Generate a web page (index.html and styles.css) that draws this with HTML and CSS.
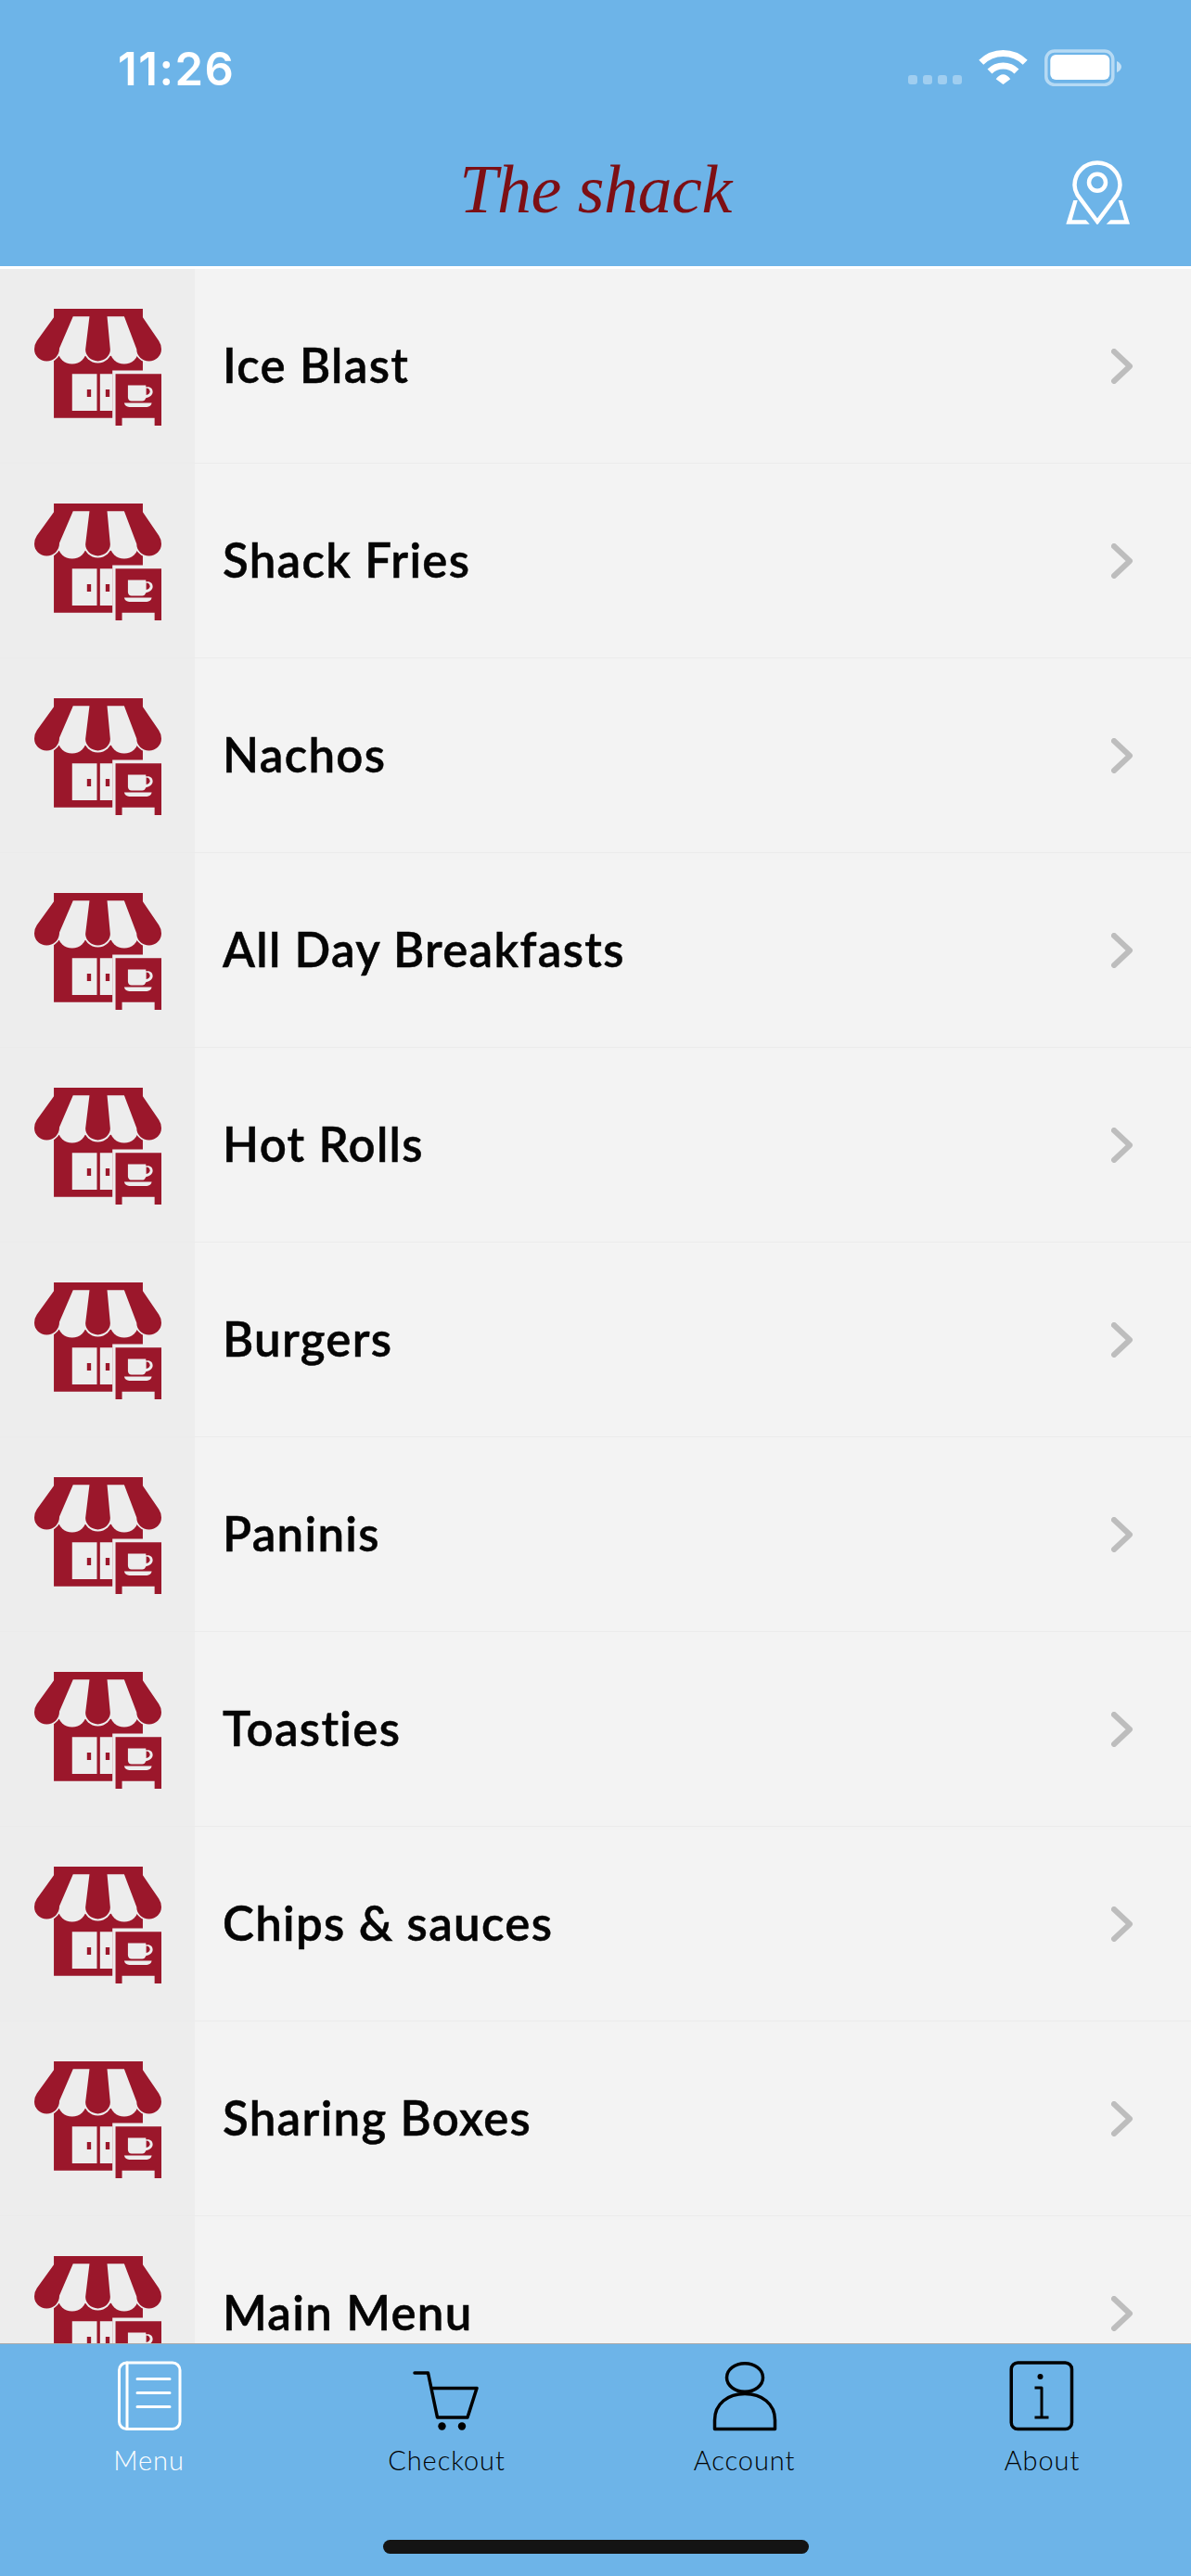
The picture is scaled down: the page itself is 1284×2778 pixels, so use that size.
FILE: index.html

```html
<!DOCTYPE html>
<html lang="en">
<head>
    <meta charset="UTF-8">
    <meta name="viewport" content="width=device-width, initial-scale=1.0">
    <title>The shack</title>
    <link rel="stylesheet" href="styles.css">
</head>
<body>
    <svg class="defs" width="0" height="0">
        <symbol id="shop" viewBox="110 158 410 377">
            <!-- building and doors -->
            <path class="red" d="M173 310H460V357H362V510H173Z"/>
            <path class="cell" d="M232 368H312V487H232ZM322 368H362V487H322Z"/>
            <path class="red" d="M280 418H293V442H280ZM340 418H353V442H340Z"/>
            <!-- gaps under the awning -->
            <ellipse class="cell" cx="232" cy="292" rx="46" ry="44"/>
            <ellipse class="cell" cx="400" cy="292" rx="46" ry="44"/>
            <ellipse class="cell" cx="315" cy="290" rx="45" ry="43"/>
            <ellipse class="cell" cx="150" cy="288" rx="45" ry="44"/>
            <ellipse class="cell" cx="480" cy="288" rx="45" ry="44"/>
            <path class="cell" d="M190 200H440V300H190Z"/>
            <!-- awning -->
            <path class="red" d="M173 158H460V186L512 262Q520 274 520 288C520 310 502 327 480 327C458 327 440 310 440 288L400 183H345L355 290C355 310 337 327 315 327C293 327 275 310 275 290L288 183H235L191 285C191 310 172 327 150 327C128 327 110 310 110 288Q110 274 118 262L173 186Z"/>
            <!-- sign with cup -->
            <path class="red" d="M372 368H520V535H498V510H393V535H372Z"/>
            <path class="cell" d="M412 405H470V410H476C486 410 492 417 492 426C492 436 484 443 470 446C468 452 464 456 458 456H424C417 456 412 451 412 444Z"/>
            <path class="red" d="M471 414C478 414 483 419 483 425C483 431 478 435 471 436Z"/>
            <path class="cell" d="M400 462H489C487 471 481 475 473 475H416C408 475 402 471 400 462Z"/>
        </symbol>
    </svg>

    <div class="header">
        <div class="status-bar">
            <div class="time">11:26</div>
            <svg class="status-icons" viewBox="0 0 230 40" width="230" height="40">
                <g class="signal">
                    <rect x="0" y="28" width="10" height="10" rx="3"/>
                    <rect x="16" y="28" width="10" height="10" rx="3"/>
                    <rect x="32" y="28" width="10" height="10" rx="3"/>
                    <rect x="48" y="28" width="10" height="10" rx="3"/>
                </g>
                <path class="wifi" d="M78.8 14.3A33.5 33.5 0 0 1 126.2 14.3"/>
                <path class="wifi" d="M88 24A20.5 20.5 0 0 1 117 24"/>
                <path class="wifi-dot" d="M94.7 32.2Q102.5 22.4 110.3 32.2L102.5 38Z"/>
                <rect class="batt-line" x="148.8" y="2" width="72" height="36.4" rx="9"/>
                <rect class="batt-fill" x="153.3" y="6" width="64" height="27" rx="6"/>
                <path class="batt-nub" d="M225 13C228 14 230 17 230 19C230 21 228 24 225 25Z"/>
            </svg>
        </div>
        <div class="nav">
            <div class="title">The shack</div>
            <svg class="pin" viewBox="0 0 69 69" width="69" height="69">
                <path class="pin-line" d="M34 66L12.500 37C10.500 33.500 9.500 30 9.500 26.500A24.500 24 0 0 1 58.500 26.500C58.500 30 57.500 33.500 55.500 37Z"/>
                <circle class="pin-line" cx="34" cy="23.700" r="9"/>
                <path class="pin-fill" d="M8.300 43H12.700L6.700 64.300H21.700L25.700 68.700H0.300ZM56.700 43H61L69 68.700H43.700L48.300 64.300H63Z"/>
            </svg>
        </div>
    </div>

    <div class="list">
        <div class="row"><div class="thumb"><svg class="shop"><use href="#shop"/></svg></div><div class="name">Ice Blast</div><svg class="chev" viewBox="0 0 24 38"><path d="M3 3L20 19L3 35"/></svg></div>
        <div class="row"><div class="thumb"><svg class="shop"><use href="#shop"/></svg></div><div class="name">Shack Fries</div><svg class="chev" viewBox="0 0 24 38"><path d="M3 3L20 19L3 35"/></svg></div>
        <div class="row"><div class="thumb"><svg class="shop"><use href="#shop"/></svg></div><div class="name">Nachos</div><svg class="chev" viewBox="0 0 24 38"><path d="M3 3L20 19L3 35"/></svg></div>
        <div class="row"><div class="thumb"><svg class="shop"><use href="#shop"/></svg></div><div class="name">All Day Breakfasts</div><svg class="chev" viewBox="0 0 24 38"><path d="M3 3L20 19L3 35"/></svg></div>
        <div class="row"><div class="thumb"><svg class="shop"><use href="#shop"/></svg></div><div class="name">Hot Rolls</div><svg class="chev" viewBox="0 0 24 38"><path d="M3 3L20 19L3 35"/></svg></div>
        <div class="row"><div class="thumb"><svg class="shop"><use href="#shop"/></svg></div><div class="name">Burgers</div><svg class="chev" viewBox="0 0 24 38"><path d="M3 3L20 19L3 35"/></svg></div>
        <div class="row"><div class="thumb"><svg class="shop"><use href="#shop"/></svg></div><div class="name">Paninis</div><svg class="chev" viewBox="0 0 24 38"><path d="M3 3L20 19L3 35"/></svg></div>
        <div class="row"><div class="thumb"><svg class="shop"><use href="#shop"/></svg></div><div class="name">Toasties</div><svg class="chev" viewBox="0 0 24 38"><path d="M3 3L20 19L3 35"/></svg></div>
        <div class="row"><div class="thumb"><svg class="shop"><use href="#shop"/></svg></div><div class="name">Chips &amp; sauces</div><svg class="chev" viewBox="0 0 24 38"><path d="M3 3L20 19L3 35"/></svg></div>
        <div class="row"><div class="thumb"><svg class="shop"><use href="#shop"/></svg></div><div class="name">Sharing Boxes</div><svg class="chev" viewBox="0 0 24 38"><path d="M3 3L20 19L3 35"/></svg></div>
        <div class="row"><div class="thumb"><svg class="shop"><use href="#shop"/></svg></div><div class="name">Main Menu</div><svg class="chev" viewBox="0 0 24 38"><path d="M3 3L20 19L3 35"/></svg></div>
    </div>

    <div class="tabbar">
        <div class="tabs">
            <div class="tab active">
                <svg viewBox="0 0 80 76" width="80" height="76">
                    <rect x="7.500" y="2" width="65.500" height="71.500" rx="8"/>
                    <path d="M16 2V73.500M27 19.500H62M27 34.500H62M27 49.500H62"/>
                </svg>
                <span>Menu</span>
            </div>
            <div class="tab">
                <svg viewBox="0 0 80 76" width="80" height="76">
                    <path d="M5 13H19.500L29.500 61H62L72 29.500H23"/>
                    <circle class="dot" cx="34.500" cy="70.500" r="4.200"/>
                    <circle class="dot" cx="56" cy="70.500" r="4.200"/>
                </svg>
                <span>Checkout</span>
            </div>
            <div class="tab">
                <svg viewBox="0 0 80 76" width="80" height="76">
                    <ellipse cx="40" cy="18" rx="19.500" ry="15.250"/>
                    <path d="M7.500 73.500V64C7.500 46 22 35.500 40 35.500C58 35.500 72.500 46 72.500 64V73.500Z"/>
                </svg>
                <span>Account</span>
            </div>
            <div class="tab">
                <svg viewBox="0 0 80 76" width="80" height="76">
                    <rect x="6.250" y="2" width="65.250" height="71.500" rx="7"/>
                    <path class="thin" d="M31.500 29H39V61M31.500 61H46.500"/>
                    <circle class="dot" cx="37.500" cy="17" r="3"/>
                </svg>
                <span>About</span>
            </div>
        </div>
        <div class="home-bar"></div>
    </div>
</body>
</html>
```

FILE: styles.css

```css
* {
    margin: 0;
    padding: 0;
    box-sizing: border-box;
}

body {
    height: 100vh;
    display: flex;
    flex-direction: column;
    overflow: hidden;
    background: #fff;
    font-family: 'Lato', 'Open Sans', sans-serif;
}

.defs {
    position: absolute;
}

.red {
    fill: #9b172b;
}

.cell {
    fill: #ededed;
}

/* Header */
.header {
    height: 290px;
    flex-shrink: 0;
    background: #6db4e8;
    border-bottom: 3px solid #fff;
}

.status-bar {
    height: 92px;
    padding: 53px 75px 0 127px;
    display: flex;
    justify-content: space-between;
    align-items: flex-start;
}

.time {
    margin-top: 3px;
    font-family: 'Inter', sans-serif;
    font-size: 49px;
    font-weight: 600;
    line-height: 38px;
    letter-spacing: 1.500px;
    color: #fff;
}

.signal {
    fill: rgba(255, 255, 255, 0.35);
}

.wifi {
    fill: none;
    stroke: #fff;
    stroke-width: 7;
}

.wifi-dot {
    fill: #fff;
}

.batt-line {
    fill: none;
    stroke: rgba(255, 255, 255, 0.5);
    stroke-width: 3.500;
}

.batt-fill {
    fill: #fff;
}

.batt-nub {
    fill: rgba(255, 255, 255, 0.6);
}

.nav {
    display: grid;
    grid-template-columns: 1fr auto 1fr;
    align-items: start;
    padding: 81px 66px 0;
}

.title {
    grid-column: 2;
    margin-top: -5px;
    font-family: 'Liberation Serif', serif;
    font-style: italic;
    font-size: 74px;
    line-height: 72px;
    letter-spacing: -0.500px;
    color: #7d0f14;
    white-space: nowrap;
}

.pin {
    grid-column: 3;
    justify-self: end;
}

.pin-line {
    fill: none;
    stroke: #fff;
    stroke-width: 4.500;
}

.pin-fill {
    fill: #fff;
}

/* Category list */
.list {
    flex: 1;
    min-height: 0;
    overflow: hidden;
    background: #f3f3f3;
}

.row {
    height: 210px;
    display: flex;
    align-items: center;
    border-bottom: 1px solid #ebebeb;
}

.thumb {
    width: 210px;
    height: 100%;
    flex-shrink: 0;
    display: flex;
    align-items: center;
    justify-content: center;
    background: #ededed;
}

.shop {
    width: 137px;
    height: 126px;
    margin-top: 2px;
}

.name {
    flex: 1;
    padding: 0 0 3px 30px;
    font-size: 51px;
    font-weight: 600;
    letter-spacing: 1.300px;
    -webkit-text-stroke: 0.500px #050505;
    color: #050505;
}

.chev {
    width: 24px;
    height: 38px;
    margin-right: 62px;
}

.chev path {
    fill: none;
    stroke: #bdbdbd;
    stroke-width: 6;
    stroke-linecap: round;
    stroke-linejoin: round;
}

/* Tab bar */
.tabbar {
    height: 251px;
    flex-shrink: 0;
    display: flex;
    flex-direction: column;
    align-items: center;
    background: #6db4e8;
    border-top: 1px solid #a9a9a9;
}

.tabs {
    width: 100%;
    display: grid;
    grid-template-columns: repeat(4, 1fr);
    padding-top: 18px;
}

.tab {
    display: flex;
    flex-direction: column;
    align-items: center;
    gap: 13px;
    color: #000;
    font-size: 29px;
    font-weight: 300;
    line-height: 36px;
    letter-spacing: 0.900px;
}

.tab svg {
    fill: none;
    stroke: #000;
    stroke-width: 3.500;
    stroke-linejoin: round;
    stroke-linecap: round;
}

.tab svg .dot {
    fill: #000;
    stroke: none;
}

.tab svg .thin {
    stroke-width: 3;
    stroke-linecap: butt;
}

.tab.active {
    color: #fff;
}

.tab.active svg {
    stroke: #fff;
    stroke-width: 3;
}

.home-bar {
    width: 459px;
    height: 15px;
    margin-top: auto;
    margin-bottom: 24px;
    border-radius: 8px;
    background: #141414;
}
```
